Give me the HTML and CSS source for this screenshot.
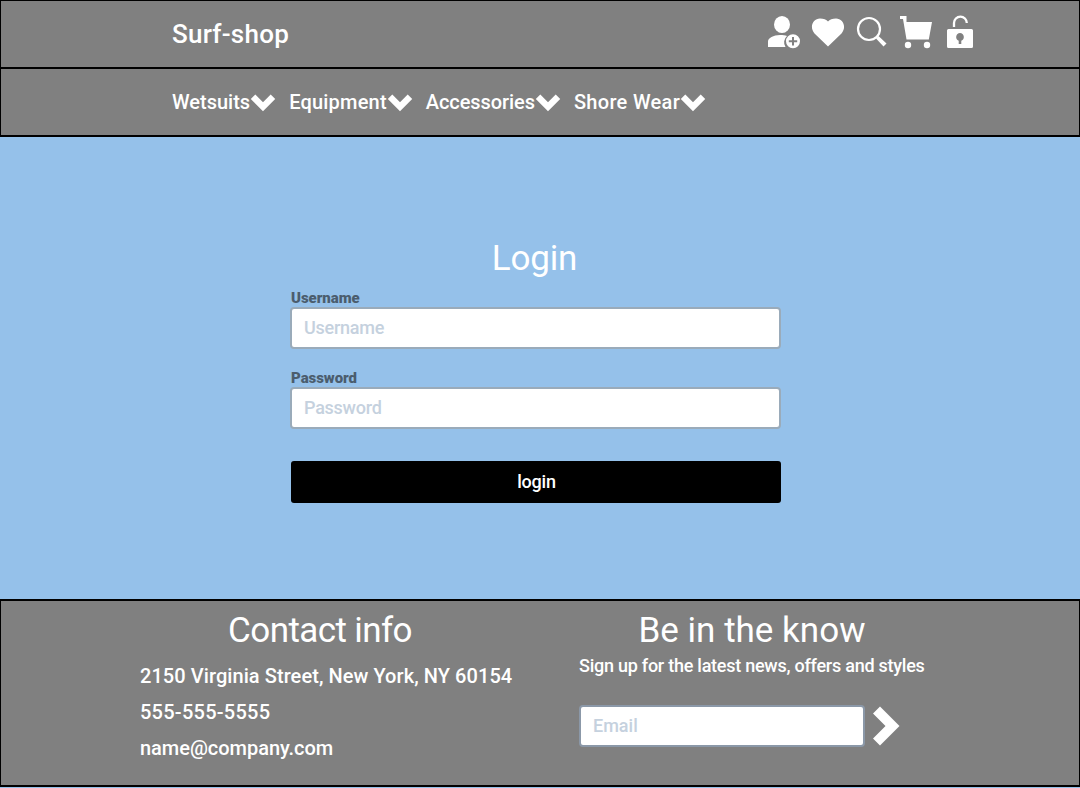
FILE: index.html
```html
<!DOCTYPE html>
<html lang="en">
<head>
<meta charset="utf-8">
<title>Surf-shop</title>
<link rel="stylesheet" href="styles.css">
</head>
<body>
<header class="topbar">
  <a class="brand">Surf-shop</a>
  <div class="icons">
    <svg class="icon" viewBox="0 0 36 36"><ellipse cx="16" cy="10.500" rx="8" ry="8.600"/><path d="M2 33v-5.500c0-3.500 5.500-6.500 12-6.500 3 0 5 .3 7 .9A8.500 8.500 0 0 0 19.500 33z"/><path fill-rule="evenodd" d="M27 20.200a7 7 0 1 0 0 14 7 7 0 0 0 0-14zm-1 2.800h2v3.200h3.200v2H28v3.200h-2v-3.200h-3.200v-2H26z"/></svg>
    <svg class="icon" viewBox="0 0 36 36"><path d="M18 32.500 4.500 19.500C-1 13 3 4.500 10 4.500c3.500 0 6.500 1.300 8 3 1.500-1.700 4.500-3 8-3 7 0 11 8.500 5.500 15z"/></svg>
    <svg class="icon" viewBox="0 0 36 36"><circle cx="15" cy="15" r="11" class="line"/><path d="m22 24.500 2.500-2.500L32.500 29.500l-3 3z"/></svg>
    <svg class="icon" viewBox="0 0 36 36"><path d="M2 2h6.500v6H34l-3.200 17.500H8.500L5 5H2z"/><circle cx="10" cy="31" r="3.200"/><circle cx="29" cy="31" r="3.200"/></svg>
    <svg class="icon" viewBox="0 0 36 36"><path class="shackle" d="M12 13V9a6.400 6.400 0 0 1 12.800 0"/><path fill-rule="evenodd" d="M6.500 15h23q1.500 0 1.500 1.500v16q0 1.500-1.500 1.500h-23Q5 34 5 32.500v-16Q5 15 6.500 15zM18 19a4 4 0 0 0-1.300 7.700V30h2.600v-3.300A4 4 0 0 0 18 19z"/></svg>
  </div>
</header>
<nav class="menu">
  <a class="item"><span>Wetsuits</span><svg class="chevron" viewBox="0 0 26 18"><path d="m.8 5 4.500-4.500L13 8.200 20.700.5 25.200 5 13 17.200z"/></svg></a>
  <a class="item equipment"><span>Equipment</span><svg class="chevron" viewBox="0 0 26 18"><path d="m.8 5 4.500-4.500L13 8.200 20.700.5 25.200 5 13 17.200z"/></svg></a>
  <a class="item accessories"><span>Accessories</span><svg class="chevron" viewBox="0 0 26 18"><path d="m.8 5 4.500-4.500L13 8.200 20.700.5 25.200 5 13 17.200z"/></svg></a>
  <a class="item shore"><span>Shore Wear</span><svg class="chevron" viewBox="0 0 26 18"><path d="m.8 5 4.500-4.500L13 8.200 20.700.5 25.200 5 13 17.200z"/></svg></a>
</nav>
<main class="content">
  <form class="login">
    <h1 class="heading">Login</h1>
    <label class="label" for="user">Username</label>
    <input class="field" id="user" type="text" placeholder="Username">
    <label class="label second" for="pass">Password</label>
    <input class="field" id="pass" type="password" placeholder="Password">
    <button class="submit" type="button">login</button>
  </form>
</main>
<footer class="footer">
  <section class="contact">
    <h2 class="heading contact-title">Contact info</h2>
    <p class="detail address">2150 Virginia Street, New York, NY 60154</p>
    <p class="detail phone">555-555-5555</p>
    <p class="detail email">name@company.com</p>
  </section>
  <section class="news">
    <h2 class="heading news-title">Be in the know</h2>
    <p class="blurb">Sign up for the latest news, offers and styles</p>
    <div class="signup">
      <input class="field" type="email" placeholder="Email" aria-label="Email">
      <svg class="arrow" viewBox="0 0 28 40"><path d="M1 7.500 8 .5 27.500 20 8 39.500l-7-7L13.500 20z"/></svg>
    </div>
  </section>
</footer>
</body>
</html>
```

FILE: styles.css
```css
* { box-sizing: border-box; }
body { margin: 0; height: 788px; overflow: hidden; background: #95c1ea; color: #fff; font-family: Roboto, "Noto Sans", sans-serif; font-weight: 500; }
h1, h2, p { margin: 0; }
svg { fill: #fff; display: block; flex: none; }
.topbar { height: 68px; border: 1px solid #000; background: #808080; padding: 0 101px 0 171px; display: flex; align-items: center; justify-content: space-between; }
.brand { font-size: 26px; letter-spacing: .25px; }
.icons { display: flex; gap: 8px; padding-bottom: 4px; }
.icon { width: 36px; height: 36px; }
.line { fill: none; stroke: #fff; stroke-width: 2.2; }
.shackle { fill: none; stroke: #fff; stroke-width: 2.3; }
.menu { height: 69px; border: 1px solid #000; border-bottom-width: 2px; background: #808080; padding-left: 171px; display: flex; align-items: center; gap: 13px; font-size: 20px; }
.item { display: flex; align-items: center; }
.equipment { letter-spacing: .2px; }
.accessories { letter-spacing: -.08px; }
.shore { letter-spacing: .32px; }
.chevron { width: 26px; height: 18px; margin-top: 2px; }
.content { height: 462px; padding: 103px 0 0 290px; }
.login { width: 491px; display: flex; flex-direction: column; }
.heading { height: 36px; font-size: 35px; line-height: 38px; font-weight: 400; text-align: center; }
.login .heading { padding-right: 2px; letter-spacing: -.2px; }
.label { font-size: 15px; line-height: 18px; margin: 13px 0 0 1px; height: 18px; color: #4b5d6e; font-weight: 900; letter-spacing: -.05px; }
.label.second { margin-top: 20px; }
.field { height: 42px; border: 2px solid #9aabba; border-radius: 4px; background: #fff; padding: 0 12px 1px; font: 500 18px Roboto, "Noto Sans", sans-serif; color: #445; width: 100%; letter-spacing: -.25px; }
.field::placeholder { color: #c5d1de; opacity: 1; }
.submit { height: 42px; margin: 32px 0 0 1px; border: 0; border-radius: 3px; background: #000; color: #fff; padding: 0 0 1px 1px; font: 500 18px Roboto, "Noto Sans", sans-serif; letter-spacing: -.2px; }
.footer { height: 188px; border: 2px solid #000; border-width: 2px 1px; background: #808080; padding: 11px 0 0 139px; display: flex; }
.contact { width: 439px; }
.contact-title { width: 360px; margin-bottom: 10px; letter-spacing: -.6px; }
.detail { font-size: 20px; line-height: 36px; white-space: nowrap; }
.address { letter-spacing: .07px; }
.phone { letter-spacing: .25px; }
.email { letter-spacing: -.03px; }
.news { width: 346px; }
.news-title { letter-spacing: 0; }
.blurb { font-size: 18px; line-height: 36px; white-space: nowrap; letter-spacing: -.25px; }
.signup { display: flex; align-items: center; gap: 7px; margin-top: 21px; }
.signup .field { width: 286px; border-color: #8b98a8; letter-spacing: 0; }
.arrow { width: 28px; height: 40px; }
```
